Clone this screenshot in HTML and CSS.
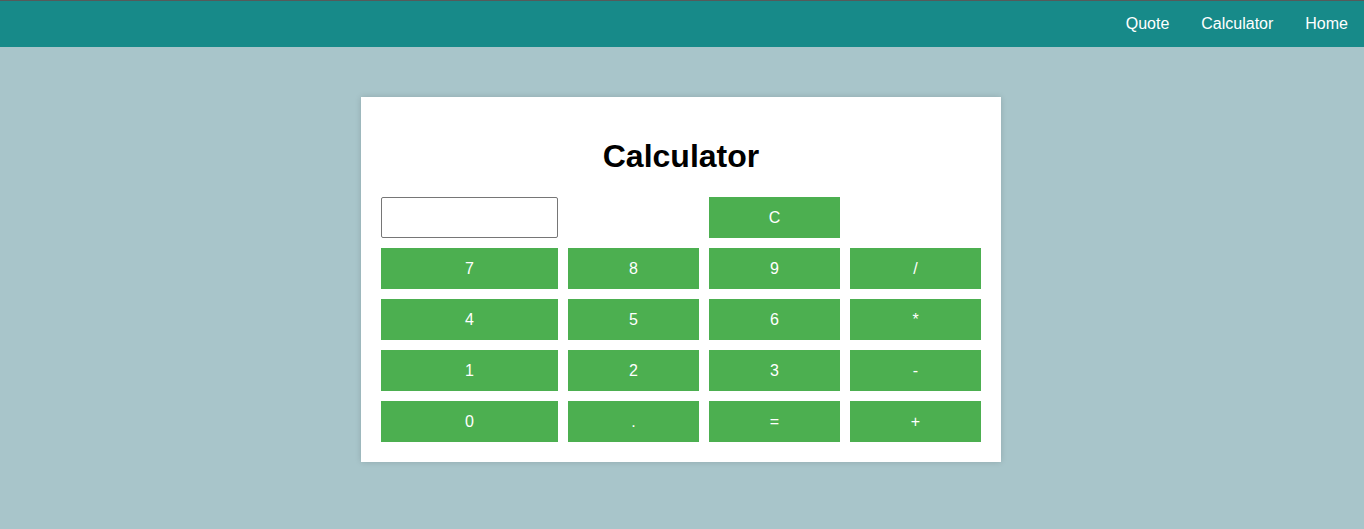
FILE: index.html
```html
<!DOCTYPE html>
<html>
<head>
<meta charset="utf-8">
<link rel="stylesheet" href="styles.css">
</head>
<body>
<nav class="navbar">
  <a class="nav-link" href="#">Quote</a>
  <a class="nav-link" href="#">Calculator</a>
  <a class="nav-link" href="#">Home</a>
</nav>
<main class="page">
  <section class="card">
    <h1 class="title">Calculator</h1>
    <div class="keys">
      <input class="display" type="text">
      <span class="blank"></span>
      <button class="key">C</button>
      <span class="blank"></span>
      <button class="key">7</button>
      <button class="key">8</button>
      <button class="key">9</button>
      <button class="key">/</button>
      <button class="key">4</button>
      <button class="key">5</button>
      <button class="key">6</button>
      <button class="key">*</button>
      <button class="key">1</button>
      <button class="key">2</button>
      <button class="key">3</button>
      <button class="key">-</button>
      <button class="key">0</button>
      <button class="key">.</button>
      <button class="key">=</button>
      <button class="key">+</button>
    </div>
  </section>
</main>
</body>
</html>
```
FILE: styles.css
```css
html, body {
  margin: 0;
  padding: 0;
}
body {
  background: #a8c5ca;
  font-family: "Liberation Sans", Arial, sans-serif;
  min-height: 529px;
}
.navbar {
  background: #178a89;
  border-top: 1px solid #555a5a;
  height: 46px;
  display: flex;
  justify-content: flex-end;
  align-items: center;
  gap: 32px;
  padding-right: 16px;
}
.nav-link {
  color: #ffffff;
  text-decoration: none;
  font-size: 16px;
}
.page {
  display: flex;
  justify-content: center;
  padding-top: 50px;
  padding-right: 2px;
}
.card {
  width: 600px;
  background: #ffffff;
  padding: 20px;
  box-shadow: 0 0 6px rgba(0, 0, 0, 0.15);
}
.title {
  margin: 21px 0 22px;
  font-size: 32px;
  font-weight: bold;
  text-align: center;
  line-height: 37px;
  color: #000;
}
.keys {
  display: grid;
  grid-template-columns: 177px 131px 131px 131px;
  grid-auto-rows: 41px;
  gap: 10px;
}
.display {
  box-sizing: border-box;
  width: 177px;
  height: 41px;
  border: 1px solid #767676;
  border-radius: 2px;
  margin: 0;
  padding: 0 4px;
  font-size: 16px;
  font-family: "Liberation Sans", Arial, sans-serif;
}
.key {
  background: #4caf50;
  color: #ffffff;
  border: none;
  margin: 0;
  padding: 0;
  font-size: 16px;
  font-family: "Liberation Sans", Arial, sans-serif;
}
```
